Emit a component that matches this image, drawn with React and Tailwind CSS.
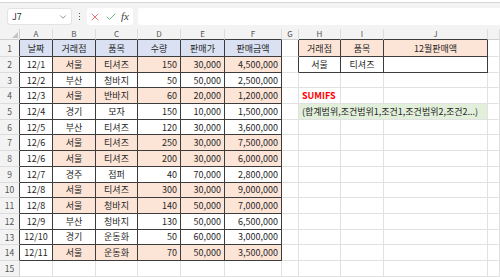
import { ChevronDown, X, Check } from "lucide-react";

const COLS =
  "grid grid-cols-[20px_33px_43px_42px_43px_44px_57px_17px_42px_43px_104px_1fr]";
const LETTERS = ["A", "B", "C", "D", "E", "F", "G", "H", "I", "J", ""];

const DATA = [
  ["12/1", "서울", "티셔즈", "150", "30,000", "4,500,000", true],
  ["12/2", "부산", "청바지", "50", "50,000", "2,500,000", false],
  ["12/3", "서울", "반바지", "60", "20,000", "1,200,000", true],
  ["12/4", "경기", "모자", "150", "10,000", "1,500,000", false],
  ["12/5", "부산", "티셔즈", "120", "30,000", "3,600,000", false],
  ["12/6", "서울", "티셔즈", "250", "30,000", "7,500,000", true],
  ["12/6", "서울", "티셔즈", "200", "30,000", "6,000,000", true],
  ["12/7", "경주", "점퍼", "40", "70,000", "2,800,000", false],
  ["12/8", "서울", "티셔즈", "300", "30,000", "9,000,000", true],
  ["12/8", "서울", "청바지", "140", "50,000", "7,000,000", true],
  ["12/9", "부산", "청바지", "130", "50,000", "6,500,000", false],
  ["12/10", "경기", "운동화", "50", "60,000", "3,000,000", false],
  ["12/11", "서울", "운동화", "70", "50,000", "3,500,000", true],
];

const base =
  "flex items-center overflow-visible whitespace-nowrap border-r border-b text-[9px] leading-none text-[#262626]";
const grid = "border-[#e1e1e1]";
const dark = "border-[#3c3c3c]";

function Cell({ className = "", children }) {
  return <div className={`${base} ${className}`}>{children}</div>;
}

function RowHead({ n, inTable }) {
  return (
    <div
      className={`flex items-center justify-center border-b border-r bg-[#f3f3f3] border-b-[#dcdcdc] text-[8.5px] text-[#555] ${
        inTable ? "border-r-[#3c3c3c]" : "border-r-[#cfcfcf]"
      }`}
    >
      {n}
    </div>
  );
}

// empty cells for G..K of a row
function Side({ row }) {
  const t = row <= 2;
  return (
    <>
      <Cell className={`${grid} ${t ? "border-r-[#3c3c3c]" : ""}`} />
      <Cell className={`${t ? dark : grid}`} />
      <Cell className={`${t ? dark : grid}`} />
      <Cell className={`${t ? dark : grid}`} />
      <Cell className={grid} />
    </>
  );
}

export default function App() {
  return (
    <div className="h-[277px] w-[500px] overflow-hidden bg-white font-['Noto_Sans_CJK_KR','Noto_Sans',sans-serif]">
      {/* ribbon edge + formula bar */}
      <div className="h-[29px] bg-[#f3f3f3]">
        <div className="h-[3px] border-b border-[#d6d6d6] bg-white" />
        <div className="flex items-center pl-[7px] pt-[5px]">
          <div className="flex h-[17px] w-[65px] items-center justify-between rounded-[3px] border border-[#e3e3e3] bg-white pl-[4px] pr-[3px] text-[9px] text-[#333]">
            <span>J7</span>
            <ChevronDown size={10} strokeWidth={1.5} className="text-[#555]" />
          </div>
          <div className="flex w-[15px] flex-col items-center gap-[1.5px]">
            <span className="h-[1.5px] w-[1.5px] bg-[#555]" />
            <span className="h-[1.5px] w-[1.5px] bg-[#555]" />
            <span className="h-[1.5px] w-[1.5px] bg-[#555]" />
          </div>
          <div className="flex h-[17px] w-[46px] items-center gap-[4px] rounded-[3px] bg-white pl-[2px]">
            <X size={12} strokeWidth={1.4} className="text-[#e03c3c]" />
            <Check size={12} strokeWidth={1.4} className="text-[#3a9a47]" />
            <span className="font-['Liberation_Serif',serif] text-[11px] italic text-[#444]">
              fx
            </span>
          </div>
          <div className="ml-[5px] h-[17px] flex-1 rounded-l-[3px] bg-white" />
        </div>
      </div>

      {/* column headers */}
      <div className={`${COLS} h-[11px]`}>
        <div className="relative border-b border-r border-[#cfcfcf] bg-[#f3f3f3]">
          <div className="absolute bottom-[1px] right-[1px] h-0 w-0 [border-bottom:6px_solid_#c4c4c4] [border-left:6px_solid_transparent]" />
        </div>
        {LETTERS.map((l, i) => {
          const t = i <= 5 || (i >= 7 && i <= 9);
          return (
            <div
              key={i}
              className={`flex items-center justify-center border-b border-r border-r-[#dcdcdc] bg-[#f3f3f3] text-[8px] leading-none text-[#555] ${
                t ? "border-b-[#3c3c3c]" : "border-b-[#cfcfcf]"
              }`}
            >
              {l}
            </div>
          );
        })}
      </div>

      {/* row 1 */}
      <div className={`${COLS} h-[17px]`}>
        <RowHead n={1} inTable />
        {["날짜", "거래점", "품목", "수량", "판매가", "판매금액"].map((h) => (
          <Cell key={h} className={`${dark} justify-center bg-[#d9e1f2]`}>
            {h}
          </Cell>
        ))}
        <Cell className={`${grid} border-r-[#3c3c3c]`} />
        <Cell className={`${dark} justify-center bg-[#fce4d6]`}>거래점</Cell>
        <Cell className={`${dark} justify-center bg-[#fce4d6]`}>품목</Cell>
        <Cell className={`${dark} justify-center bg-[#fce4d6]`}>12월판매액</Cell>
        <Cell className={grid} />
      </div>

      {/* data rows */}
      {DATA.map((r, i) => {
        const row = i + 2;
        const pc = r[6] ? "bg-[#fce4d6]" : "";
        return (
          <div key={row} className={`${COLS} h-[15.7px]`}>
            <RowHead n={row} inTable />
            <Cell className={`${dark} justify-center`}>{r[0]}</Cell>
            <Cell className={`${dark} ${pc} justify-center`}>{r[1]}</Cell>
            <Cell className={`${dark} ${pc} justify-center`}>{r[2]}</Cell>
            <Cell className={`${dark} ${pc} justify-end pr-[3px]`}>{r[3]}</Cell>
            <Cell className={`${dark} ${pc} justify-end pr-[3px]`}>{r[4]}</Cell>
            <Cell className={`${dark} ${pc} justify-end pr-[3px]`}>{r[5]}</Cell>
            {row === 2 ? (
              <>
                <Cell className={`${grid} border-r-[#3c3c3c]`} />
                <Cell className={`${dark} justify-center`}>서울</Cell>
                <Cell className={`${dark} justify-center`}>티셔즈</Cell>
                <Cell className={dark} />
                <Cell className={grid} />
              </>
            ) : row === 4 ? (
              <>
                <Cell className={grid} />
                <Cell className={`${grid} pl-[3px] font-bold text-[#ff0000]`}>SUMIFS</Cell>
                <Cell className={grid} />
                <Cell className={grid} />
                <Cell className={grid} />
              </>
            ) : row === 5 ? (
              <>
                <Cell className={grid} />
                <Cell className={`${grid} col-span-3 bg-[#e2efda] pl-[3px]`}>
                  (합계범위,조건범위1,조건1,조건범위2,조건2...)
                </Cell>
                <Cell className={grid} />
              </>
            ) : (
              <Side row={row} />
            )}
          </div>
        );
      })}

      {/* row 15 */}
      <div className={`${COLS} h-[16px]`}>
        <RowHead n={15} />
        {LETTERS.map((l, i) => (
          <Cell key={i} className={grid} />
        ))}
      </div>
    </div>
  );
}
